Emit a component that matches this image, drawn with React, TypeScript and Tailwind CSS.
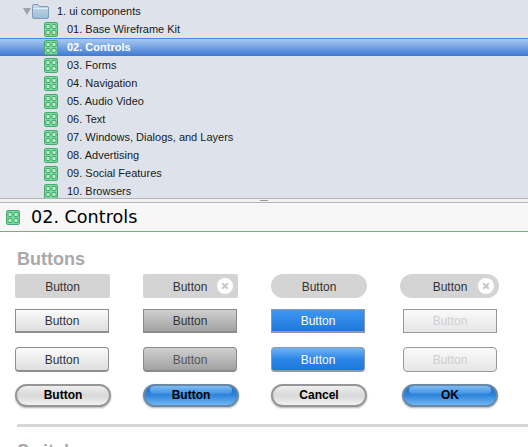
import React from "react";

const items = [
  "01. Base Wireframe Kit",
  "02. Controls",
  "03. Forms",
  "04. Navigation",
  "05. Audio Video",
  "06. Text",
  "07. Windows, Dialogs, and Layers",
  "08. Advertising",
  "09. Social Features",
  "10. Browsers",
];

function PageIcon({ className = "" }: { className?: string }) {
  return (
    <svg width="14" height="15" viewBox="0 0 14 15" className={className}>
      <rect x="0.5" y="0.5" width="13" height="14" rx="1.5" fill="#72e09a" stroke="#4aa873" />
      {[2, 8].map((x) =>
        [2.5, 8.5].map((y) => (
          <rect key={`${x}-${y}`} x={x} y={y} width="4" height="4" rx="1" fill="#b4f0c8" stroke="#4f9e72" strokeWidth="1" />
        ))
      )}
    </svg>
  );
}

function Folder() {
  return (
    <svg width="17" height="16" viewBox="0 0 17 16">
      <defs>
        <linearGradient id="fold" x1="0" y1="0" x2="0" y2="1">
          <stop offset="0" stopColor="#c6d9e8" />
          <stop offset="1" stopColor="#9dbcd6" />
        </linearGradient>
      </defs>
      <path d="M0.5 3 Q0.5 1.5 2 1.5 H6 L7.5 3.5 H15 Q16.5 3.5 16.5 5 V14 Q16.5 15.5 15 15.5 H2 Q0.5 15.5 0.5 14 Z" fill="url(#fold)" stroke="#7d9cb8" />
      <path d="M1 5.5 H16" stroke="#e3eef6" />
    </svg>
  );
}

function Clear() {
  return (
    <span className="absolute right-[5px] top-[4px] flex h-4 w-4 items-center justify-center rounded-full bg-white">
      <svg width="8" height="8" viewBox="0 0 8 8">
        <path d="M1.2 1.2 L6.8 6.8 M6.8 1.2 L1.2 6.8" stroke="#c8c8c8" strokeWidth="2" />
      </svg>
    </span>
  );
}

const rect2 = "flex h-6 w-[94px] items-center justify-center border text-[12px]";
const glossy =
  "relative flex h-[23px] w-[96px] items-center justify-center rounded-full border-2 pb-px text-[12px] font-bold text-black shadow-[0_1px_2px_rgba(0,0,0,0.3)]";

function GrayGloss({ label }: { label: string }) {
  return (
    <div className={`${glossy} border-[#969696] bg-gradient-to-b from-[#efefef] via-[#d8d8d8] to-[#f2f2f2]`}>{label}</div>
  );
}

function BlueGloss({ label }: { label: string }) {
  return (
    <div className={`${glossy} overflow-hidden border-[#6b88a5] bg-gradient-to-b from-[#1b6fc9] via-[#2f86dc] to-[#6fb6f2]`}>
      <span className="absolute left-[5px] right-[5px] top-0 h-[8px] rounded-full bg-gradient-to-b from-[#7cbcf2] to-[#3f90e2]" />
      <span className="relative">{label}</span>
    </div>
  );
}

export default function App() {
  return (
    <div className="h-[447px] w-[528px] overflow-hidden bg-white font-['Liberation_Sans',Arial,sans-serif]">
      {/* Tree */}
      <div className="h-[198px] overflow-hidden bg-[#dee3eb] pt-[2px] text-[11px] text-[#1a1a1a]">
        <div className="flex h-[18px] items-center">
          <span className="ml-[23px] h-0 w-0 border-x-[4px] border-t-[7px] border-x-transparent border-t-[#9aa3ac]" />
          <span className="ml-[1px] flex"><Folder /></span>
          <span className="ml-[8px] pt-px">1. ui components</span>
        </div>
        {items.map((t, i) =>
          i === 1 ? (
            <div
              key={t}
              className="flex h-[18px] items-center border-t border-[#4a8be0] bg-gradient-to-b from-[#a9c9f0] to-[#3c78d2] pl-[44px] font-bold text-white"
            >
              <PageIcon />
              <span className="ml-[9px]">{t}</span>
            </div>
          ) : (
            <div key={t} className="flex h-[18px] items-center pl-[44px]">
              <PageIcon />
              <span className="ml-[9px] pt-px">{t}</span>
            </div>
          )
        )}
      </div>
      {/* Splitter */}
      <div className="flex h-[5px] justify-center border-y border-[#b4b4b4] bg-[#f2f2f2]">
        <span className="mt-[1px] h-px w-2 bg-[#9a9a9a]" />
      </div>
      {/* Title */}
      <div className="flex h-[29px] items-center border-b border-[#6db283] bg-[#f7f7f7] pl-[6px] font-['DejaVu_Sans',sans-serif] text-[17.6px] text-black">
        <PageIcon />
        <span className="ml-[11px] pt-px">02. Controls</span>
      </div>
      {/* Body */}
      <div className="pl-[15px] text-[#333]">
        <h2 className="ml-[2px] mt-[18px] text-[18px] font-bold leading-[18px] text-[#a9a9a9]">Buttons</h2>
        <div className="mt-[6px] grid grid-cols-[128px_128px_129px_100px] text-[12px]">
          <div className="flex h-6 w-[95px] items-center justify-center rounded-[2px] bg-[#d4d4d4] pt-px">Button</div>
          <div className="relative flex h-6 w-[95px] items-center justify-center rounded-[2px] bg-[#d4d4d4] pr-[1px] pt-px">
            Button
            <Clear />
          </div>
          <div className="flex h-6 w-[96px] items-center justify-center rounded-full bg-[#d4d4d4] pt-px">Button</div>
          <div className="relative flex h-6 w-[99px] items-center justify-center rounded-full bg-[#d4d4d4] pl-[1px] pt-px">
            Button
            <Clear />
          </div>
        </div>
        <div className="mt-[11px] grid grid-cols-[128px_128px_132px_100px]">
          <div className={`${rect2} border-[#8f8f8f] border-b-2 bg-gradient-to-b from-[#fbfbfb] to-[#dedede]`}>Button</div>
          <div className={`${rect2} border-[#8a8a8a] border-b-2 bg-gradient-to-b from-[#d0d0d0] to-[#a2a2a2]`}>Button</div>
          <div className={`${rect2} border-[#8c9aa8] border-b-2 bg-gradient-to-b from-[#3d97f0] to-[#1f78dd] text-white`}>Button</div>
          <div className={`${rect2} border-[#999] bg-gradient-to-b from-[#fafafa] to-[#e6e6e6] text-[#cfcfcf]`}>Button</div>
        </div>
        <div className="mt-[14px] grid grid-cols-[128px_128px_132px_100px]">
          <div className={`${rect2} h-[25px] rounded-[4px] border-[#8f8f8f] border-b-2 bg-gradient-to-b from-[#fbfbfb] to-[#dedede] pt-px`}>Button</div>
          <div className={`${rect2} h-[25px] rounded-[4px] border-[#8a8a8a] border-b-2 bg-gradient-to-b from-[#d0d0d0] to-[#a2a2a2] pt-px text-[#555]`}>Button</div>
          <div className={`${rect2} h-[25px] rounded-[4px] border-[#8c9aa8] border-b-2 bg-gradient-to-b from-[#6fb3f3] via-[#2b86e6] to-[#1f78dd] pt-px text-white`}>Button</div>
          <div className={`${rect2} h-[25px] rounded-[4px] border-[#999] bg-gradient-to-b from-[#fafafa] to-[#e6e6e6] pt-px text-[#cfcfcf]`}>Button</div>
        </div>
        <div className="mt-[12px] grid grid-cols-[128px_128px_131px_100px]">
          <GrayGloss label="Button" />
          <BlueGloss label="Button" />
          <GrayGloss label="Cancel" />
          <BlueGloss label="OK" />
        </div>
        <div className="ml-[2px] mt-[17px] h-[3px] bg-[#d6d6d6]" />
        <h2 className="ml-[2px] mt-[15px] text-[18px] font-bold leading-[18px] text-[#a9a9a9]">Switches</h2>
      </div>
    </div>
  );
}
